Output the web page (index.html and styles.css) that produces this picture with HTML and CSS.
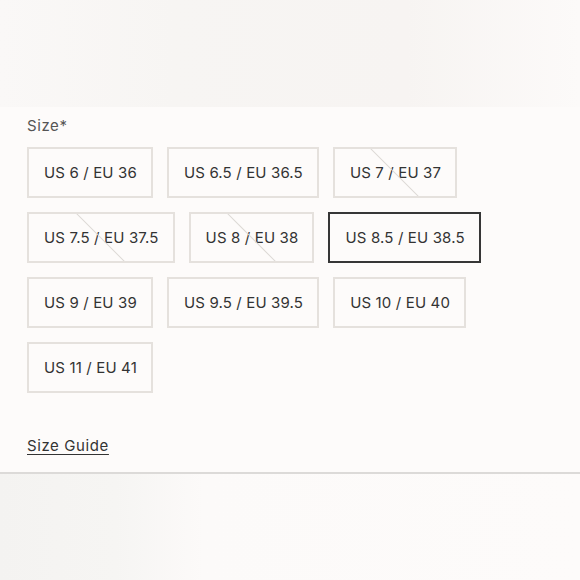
FILE: index.html
```html
<!DOCTYPE html>
<html>
<head>
<meta charset="utf-8">
<link rel="stylesheet" href="styles.css">
</head>
<body>
<div class="hero"></div>
<section class="picker">
  <div class="label">Size*</div>
  <div class="options">
    <span class="opt">US 6 / EU 36</span>
    <span class="opt">US 6.5 / EU 36.5</span>
    <span class="opt off">US 7 / EU 37</span>
    <span class="opt off">US 7.5 / EU 37.5</span>
    <span class="opt off">US 8 / EU 38</span>
    <span class="opt sel">US 8.5 / EU 38.5</span>
    <span class="opt">US 9 / EU 39</span>
    <span class="opt">US 9.5 / EU 39.5</span>
    <span class="opt">US 10 / EU 40</span>
    <span class="opt">US 11 / EU 41</span>
  </div>
  <a class="guide" href="#">Size Guide</a>
</section>
<div class="rule"></div>
<div class="below"></div>
</body>
</html>
```
FILE: styles.css
```css
html, body {
  margin: 0;
  background: #fdfbfa;
  font-family: Inter, "Noto Sans", sans-serif;
  color: #333;
}
.hero {
  height: 107px;
  background: linear-gradient(90deg, #faf8f7 0%, #f7f5f3 30%, #f7f4f2 70%, #fcfaf9 100%);
}
.picker {
  padding: 9px 27px 0 27px;
}
.label {
  font-size: 15px;
  letter-spacing: 0.6px;
  color: #555;
  line-height: 20px;
}
.options {
  display: flex;
  flex-wrap: wrap;
  gap: 14px 14px;
  margin-top: 11px;
}
.opt {
  position: relative;
  overflow: hidden;
  display: flex;
  align-items: center;
  height: 51px;
  box-sizing: border-box;
  padding: 0 14px 0 15px;
  border: 2px solid #e5e1dd;
  font-size: 15px;
  letter-spacing: 0.15px;
  color: #333;
}
.opt.sel {
  border-color: #363636;
}
.opt.off::after {
  content: "";
  position: absolute;
  left: 50%;
  top: 50%;
  width: 1px;
  height: 74px;
  background: #dcd8d4;
  transform: translate(-50%, -50%) rotate(-45deg);
}
.guide {
  display: inline-block;
  margin-top: 43px;
  font-size: 15px;
  letter-spacing: 0.6px;
  color: #333;
  text-decoration: underline;
  text-underline-offset: 3px;
  line-height: 20px;
}
.rule {
  margin-top: 16px;
  height: 2px;
  background: #dcdad8;
}
.below {
  height: 120px;
  background: linear-gradient(90deg, #f4f3f1 0%, #f6f5f3 20%, #fcfaf9 35%, #fdfbfa 100%);
}
```
